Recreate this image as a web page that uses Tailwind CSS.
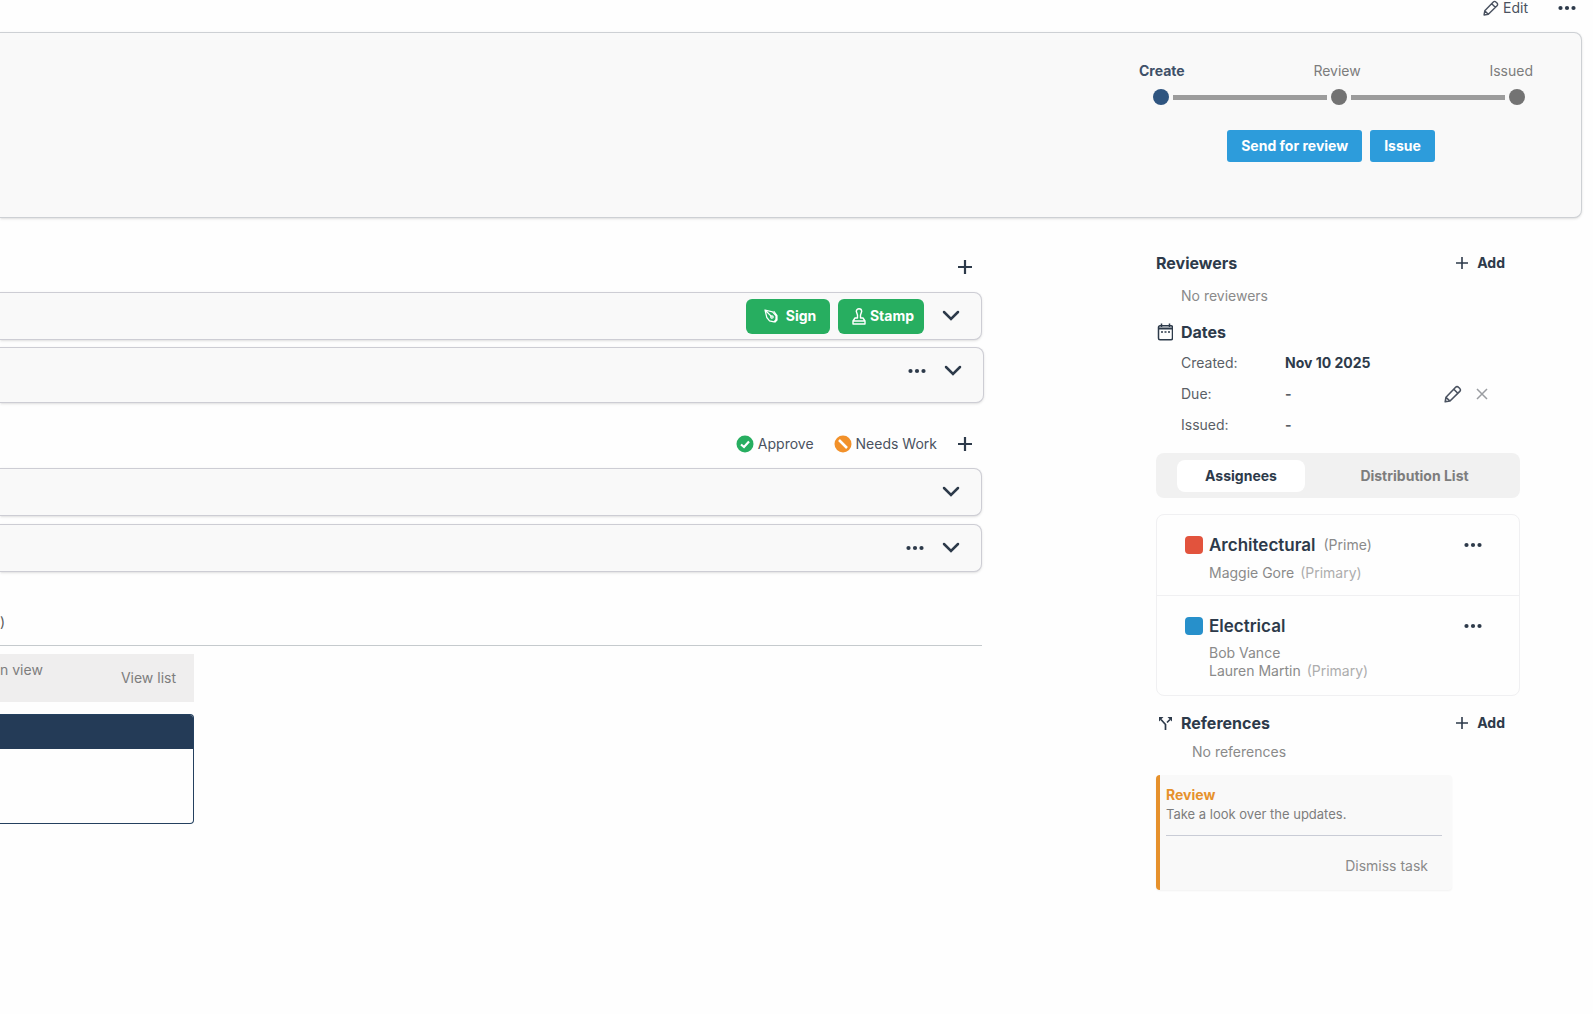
<!DOCTYPE html>
<html lang="en">
<head>
    <meta charset="UTF-8">
    <meta name="viewport" content="width=device-width, initial-scale=1.0">
    <title>Submittal Review</title>
    <script src="https://cdn.jsdelivr.net/npm/@tailwindcss/browser@4"></script>
</head>
<body class="min-h-screen overflow-x-hidden bg-[#fefefe] font-['Inter',sans-serif] text-sm leading-5 text-[#2d3a4a]">
    <!-- Shared icons -->
    <svg class="hidden">
        <symbol id="pencil" viewBox="0 0 18 18"><path d="M1.200 16.800l.8-4.600 9.600-10a2 2 0 0 1 2.900 0l1.300 1.300a2 2 0 0 1 0 2.900L6 16zM9.800 4.200l4 4M2.200 12.500l3.500 3.300" fill="none" stroke="currentColor" stroke-width="1.600" stroke-linejoin="round" stroke-linecap="round"/></symbol>
        <symbol id="dots" viewBox="0 0 18 6"><circle cx="2.500" cy="3" r="2.100"/><circle cx="9" cy="3" r="2.100"/><circle cx="15.500" cy="3" r="2.100"/></symbol>
        <symbol id="plus" viewBox="0 0 16 16"><path d="M8 1v14M1 8h14" fill="none" stroke="currentColor" stroke-width="2.200"/></symbol>
        <symbol id="plus-thin" viewBox="0 0 14 14"><path d="M7 1v12M1 7h12" fill="none" stroke="currentColor" stroke-width="1.600"/></symbol>
        <symbol id="chevron" viewBox="0 0 18 12"><path d="M2 2l7 7 7-7" fill="none" stroke="currentColor" stroke-width="2.500" stroke-linecap="round"/></symbol>
    </svg>

    <!-- Top actions -->
    <header class="flex h-8 items-start justify-end gap-[30px] pr-[17px]">
        <button class="flex h-4 items-center gap-1 text-[#4a5260]">
            <svg class="size-4"><use href="#pencil"/></svg>
            Edit
        </button>
        <button class="flex h-4 items-center" aria-label="More actions"><svg class="h-1.5 w-[18px] fill-current"><use href="#dots"/></svg></button>
    </header>

    <!-- Status panel -->
    <section class="mr-[11px] flex h-[186px] justify-end rounded-r-lg border border-l-0 border-[#cdd0d4] bg-[#f9f9f9] pt-7 pr-12 shadow-sm">
        <div class="w-[394px]">
            <ol class="flex justify-between text-[#7d7d7d]">
                <li class="font-bold text-[#3e5068]">Create</li>
                <li>Review</li>
                <li>Issued</li>
            </ol>
            <div class="mt-2 flex items-center justify-between gap-1 pr-2 pl-3.5">
                <span class="size-4 rounded-full bg-[#2f5580]"></span>
                <span class="h-[5px] grow bg-[#9c9c9c]"></span>
                <span class="size-4 rounded-full bg-[#737373]"></span>
                <span class="h-[5px] grow bg-[#9c9c9c]"></span>
                <span class="size-4 rounded-full bg-[#737373]"></span>
            </div>
            <div class="mt-[25px] flex justify-center gap-2 pr-2.5">
                <button class="h-8 rounded-[3px] bg-[#2d9cdb] px-3.5 font-bold text-white">Send for review</button>
                <button class="h-8 rounded-[3px] bg-[#2d9cdb] px-3.5 font-bold text-white">Issue</button>
            </div>
        </div>
    </section>

    <div class="flex justify-between pr-[73px]">
        <!-- Documents -->
        <main class="w-[984px]">
            <div class="flex h-[74px] items-center justify-end pt-6 pr-[11px]">
                <button aria-label="Add document"><svg class="size-4"><use href="#plus"/></svg></button>
            </div>
            <section class="mr-0.5 flex h-12 items-center justify-end gap-2 rounded-r-lg border border-l-0 border-[#cdcdd4] bg-[#f9f9f9] pr-[21px] shadow-sm">
                <button class="flex h-[35px] w-[84px] items-center justify-center gap-2 rounded-md bg-[#27ae60] pl-1 font-bold text-white">
                    <svg class="size-3.5" viewBox="0 0 14 14" fill="none" stroke="currentColor" stroke-width="1.200" stroke-linejoin="round" stroke-linecap="round"><path d="M1 1l7.500 1.800 3.500 4v3.700L10 12.800l-4.500-1L2.800 8.500zM1 1l6 6M10 2.500l3 4v4.500l-2 2"/><circle cx="8" cy="8" r="1.200"/></svg>
                    Sign
                </button>
                <button class="flex h-[35px] w-[86px] items-center justify-center gap-1 rounded-md bg-[#27ae60] pl-1 font-bold text-white">
                    <svg class="h-[18px] w-3.5" viewBox="0 0 14 18" fill="none" stroke="currentColor" stroke-width="1.400" stroke-linejoin="round"><path d="M5.500 11V8L4.300 4.500a2.700 2.700 0 1 1 5.400 0L8.500 8v3H11l2 3v3H1v-3l2-3zM1 14h12"/></svg>
                    Stamp
                </button>
                <button class="ml-2.5" aria-label="Expand"><svg class="h-3 w-[18px]"><use href="#chevron"/></svg></button>
            </section>
            <section class="mt-[7px] flex h-14 items-start justify-end gap-[18px] rounded-r-lg border border-l-0 border-[#cdcdd4] bg-[#f9f9f9] pt-[17px] pr-[21px] shadow-sm">
                <button class="flex h-3 items-center" aria-label="More"><svg class="h-1.5 w-[18px] fill-current"><use href="#dots"/></svg></button>
                <button aria-label="Expand"><svg class="h-3 w-[18px]"><use href="#chevron"/></svg></button>
            </section>

            <div class="flex h-[65px] items-center justify-end pt-4 pr-[11px] text-[#4a5260]">
                <button class="flex items-center gap-1">
                    <svg class="size-[18px]" viewBox="0 0 18 18"><circle cx="9" cy="9" r="8.500" fill="#27ae60"/><path d="M5 9.500l3 2.500 5-5.500" fill="none" stroke="#fff" stroke-width="2.200"/></svg>
                    Approve
                </button>
                <button class="ml-5 flex items-center gap-1">
                    <svg class="size-[18px]" viewBox="0 0 18 18"><circle cx="9" cy="9" r="8.500" fill="#f2912a"/><path d="M5 5l8 8" stroke="#fff" stroke-width="2.500"/></svg>
                    Needs Work
                </button>
                <button class="ml-5 text-[#2d3a4a]" aria-label="Add drawing"><svg class="size-4"><use href="#plus"/></svg></button>
            </div>
            <section class="mr-0.5 flex h-12 items-center justify-end rounded-r-lg border border-l-0 border-[#cdcdd4] bg-[#f9f9f9] pr-[21px] shadow-sm">
                <button aria-label="Expand"><svg class="h-3 w-[18px]"><use href="#chevron"/></svg></button>
            </section>
            <section class="mt-2 mr-0.5 flex h-12 items-center justify-end gap-[18px] rounded-r-lg border border-l-0 border-[#cdcdd4] bg-[#f9f9f9] pr-[21px] shadow-sm">
                <button aria-label="More"><svg class="h-1.5 w-[18px] fill-current"><use href="#dots"/></svg></button>
                <button aria-label="Expand"><svg class="h-3 w-[18px]"><use href="#chevron"/></svg></button>
            </section>

            <h2 class="mr-0.5 h-[74px] border-b border-[#c5cacd] pt-10 text-[#5a5a5a]">)</h2>
            <div class="mt-2 flex h-12 w-[194px] justify-between bg-[#efeeee] pr-[18px] text-[#7d7d7d]">
                <p class="pt-1.5">n view</p>
                <a href="#" class="self-center">View list</a>
            </div>
            <div class="mt-3 h-[110px] w-[194px] overflow-hidden rounded-r border border-l-0 border-[#24405f]">
                <div class="h-[34px] bg-[#243b57]"></div>
            </div>
        </main>

        <!-- Sidebar -->
        <aside class="w-[364px] pt-[35px]">
            <div class="flex items-center justify-between pr-[15px]">
                <h2 class="text-base leading-5 font-bold">Reviewers</h2>
                <button class="flex items-center gap-2 font-bold"><svg class="size-3.5"><use href="#plus-thin"/></svg>Add</button>
            </div>
            <p class="mt-[13px] pl-[25px] text-[#8a8a8a]">No reviewers</p>

            <h2 class="mt-4 flex items-center gap-2 text-base leading-5 font-bold">
                <svg class="h-[18px] w-[17px]" viewBox="0 0 17 18" fill="none" stroke="currentColor" stroke-width="1.500"><rect x="2.500" y="2.800" width="14" height="14" rx="1.500"/><path d="M2.500 5.500h14" stroke-width="2"/><path d="M5.500 0.500V4M13.500 0.500V4"/><path d="M5 9h9.500" stroke-dasharray="2 1.500"/></svg>
                Dates
            </h2>
            <dl class="mt-[11px] grid grid-cols-[104px_1fr] gap-y-[11px] pl-[25px] text-[#5a5f66]">
                <dt>Created:</dt>
                <dd class="font-bold text-[#2d3a4a]">Nov 10 2025</dd>
                <dt>Due:</dt>
                <dd class="flex items-center pr-8 font-bold">
                    <span class="grow">-</span>
                    <button class="text-[#4a5260]" aria-label="Edit due date"><svg class="size-[18px]"><use href="#pencil"/></svg></button>
                    <button class="ml-3.5 text-[#9a9da1]" aria-label="Clear due date"><svg class="size-3" viewBox="0 0 12 12"><path d="M1 1l10 10M11 1L1 11" stroke="currentColor" stroke-width="1.500"/></svg></button>
                </dd>
                <dt>Issued:</dt>
                <dd class="font-bold">-</dd>
            </dl>

            <div class="mt-[18px] flex h-[45px] items-center rounded-lg bg-[#f1f1f1] pl-[21px] font-bold">
                <button class="h-8 w-[128px] rounded-lg bg-white">Assignees</button>
                <button class="grow pl-1 text-[#7d7d7d]">Distribution List</button>
            </div>

            <div class="mt-4 rounded-lg border border-[#f0f0f2]">
                <section class="h-[81px] border-b border-[#f0f0f2] pt-5 pl-7">
                    <div class="flex items-center pr-[37px]">
                        <span class="size-[18px] rounded bg-[#e2533d]"></span>
                        <h3 class="ml-1.5 text-[17px] leading-5 font-semibold">Architectural</h3>
                        <span class="ml-2 grow text-[#8a8a8a]">(Prime)</span>
                        <button aria-label="More"><svg class="h-1.5 w-[18px] fill-current"><use href="#dots"/></svg></button>
                    </div>
                    <p class="mt-2 pl-6 text-[#8a8a8a]">Maggie Gore <span class="ml-0.5 text-[#adadad]">(Primary)</span></p>
                </section>
                <section class="h-[99px] pt-5 pl-7">
                    <div class="flex items-center pr-[37px]">
                        <span class="size-[18px] rounded bg-[#2790cb]"></span>
                        <h3 class="ml-1.5 grow text-[17px] leading-5 font-semibold">Electrical</h3>
                        <button aria-label="More"><svg class="h-1.5 w-[18px] fill-current"><use href="#dots"/></svg></button>
                    </div>
                    <p class="mt-2 pl-6 leading-[18px] text-[#8a8a8a]">Bob Vance<br>Lauren Martin <span class="ml-0.5 text-[#adadad]">(Primary)</span></p>
                </section>
            </div>

            <div class="mt-[17px] flex items-center justify-between pr-[15px]">
                <h2 class="flex items-center gap-2 text-base leading-5 font-bold">
                    <svg class="h-3.5 w-[17px]" viewBox="0 0 17 14" fill="none" stroke="currentColor" stroke-width="1.700"><path d="M9.500 14V8.500L5 3.500M11 6.500l3-3"/><path d="M3 5.500V1h4.500zM16 5.500V1h-4.500z" fill="currentColor" stroke="none"/></svg>
                    References
                </h2>
                <button class="flex items-center gap-2 font-bold"><svg class="size-3.5"><use href="#plus-thin"/></svg>Add</button>
            </div>
            <p class="mt-[9px] pl-9 text-[#8a8a8a]">No references</p>

            <section class="mt-[13px] mr-[68px] h-[115px] rounded border-l-4 border-[#e6912c] bg-[#f9f9f9] pt-2.5 pr-2.5 pl-1.5 shadow-xs">
                <h3 class="font-bold text-[#e6912c]">Review</h3>
                <p class="border-b border-[#c9ccd6] pb-3 text-[13px] leading-[18px] text-[#7d7d7d]">Take a look over the updates.</p>
                <div class="flex justify-end pt-5 pr-3.5">
                    <button class="text-[#8a8a8a]">Dismiss task</button>
                </div>
            </section>
        </aside>
    </div>
</body>
</html>
